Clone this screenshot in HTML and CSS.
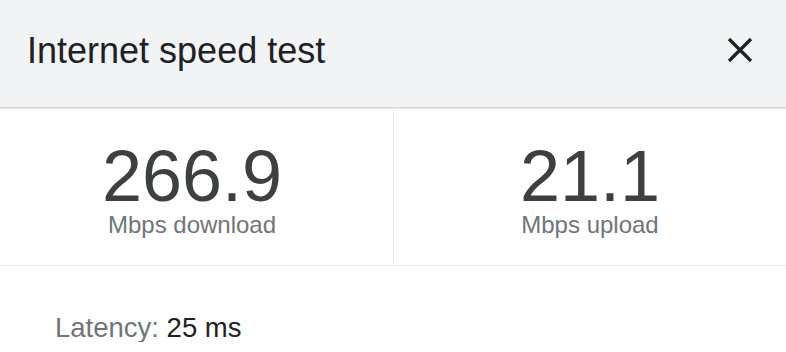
FILE: index.html
```html
<!DOCTYPE html>
<html>
<head>
<meta charset="utf-8">
<link rel="stylesheet" href="styles.css">
</head>
<body>
<div class="card">
  <header class="header">
    <h1 class="title">Internet speed test</h1>
    <button class="close" aria-label="Close">
      <svg width="26" height="26" viewBox="0 0 26 26"><path d="M2 2L24 24M24 2L2 24" stroke="#202124" stroke-width="3.2" fill="none"/></svg>
    </button>
  </header>
  <div class="stats">
    <div class="stat stat-left">
      <div class="value">266.9</div>
      <div class="label">Mbps download</div>
    </div>
    <div class="stat">
      <div class="value">21.1</div>
      <div class="label">Mbps upload</div>
    </div>
  </div>
  <div class="latency"><span class="lat-label">Latency:</span> <span class="lat-value">25 ms</span></div>
</div>
</body>
</html>
```
FILE: styles.css
```css
html, body {
  margin: 0;
  padding: 0;
  background: #ffffff;
  font-family: "Liberation Sans", Arial, Helvetica, sans-serif;
}
.card {
  width: 786px;
}
.header {
  height: 108px;
  box-sizing: border-box;
  background: #f1f3f4;
  border-bottom: 1px solid #d6d8da;
  box-shadow: 0 1px 0 #ebeced;
  display: flex;
  justify-content: space-between;
  align-items: flex-start;
  padding: 33px 33px 0 27px;
}
.title {
  margin: 0;
  font-size: 36px;
  line-height: 36px;
  font-weight: 400;
  color: #202124;
}
.close {
  border: 0;
  background: transparent;
  padding: 0;
  margin-top: 4px;
  width: 26px;
  height: 26px;
  display: block;
}
.close svg { display: block; }
.stats {
  display: grid;
  grid-template-columns: 394px 1fr;
  border-bottom: 1px solid #ebebeb;
  margin-top: 1px;
}
.stat {
  height: 156px;
  box-sizing: border-box;
  padding-top: 34px;
  display: flex;
  flex-direction: column;
  align-items: center;
}
.stat-left {
  border-right: 1px solid #ebebeb;
  padding-right: 9px;
}
.value {
  font-size: 72px;
  line-height: 66px;
  color: #3c4043;
}
.label {
  font-size: 24px;
  line-height: 26px;
  margin-top: 3px;
  color: #70757a;
}
.latency {
  margin-top: 48px;
  padding-left: 55px;
  font-size: 27.5px;
  line-height: 28px;
}
.lat-label { color: #70757a; }
.lat-value { color: #202124; }
```
